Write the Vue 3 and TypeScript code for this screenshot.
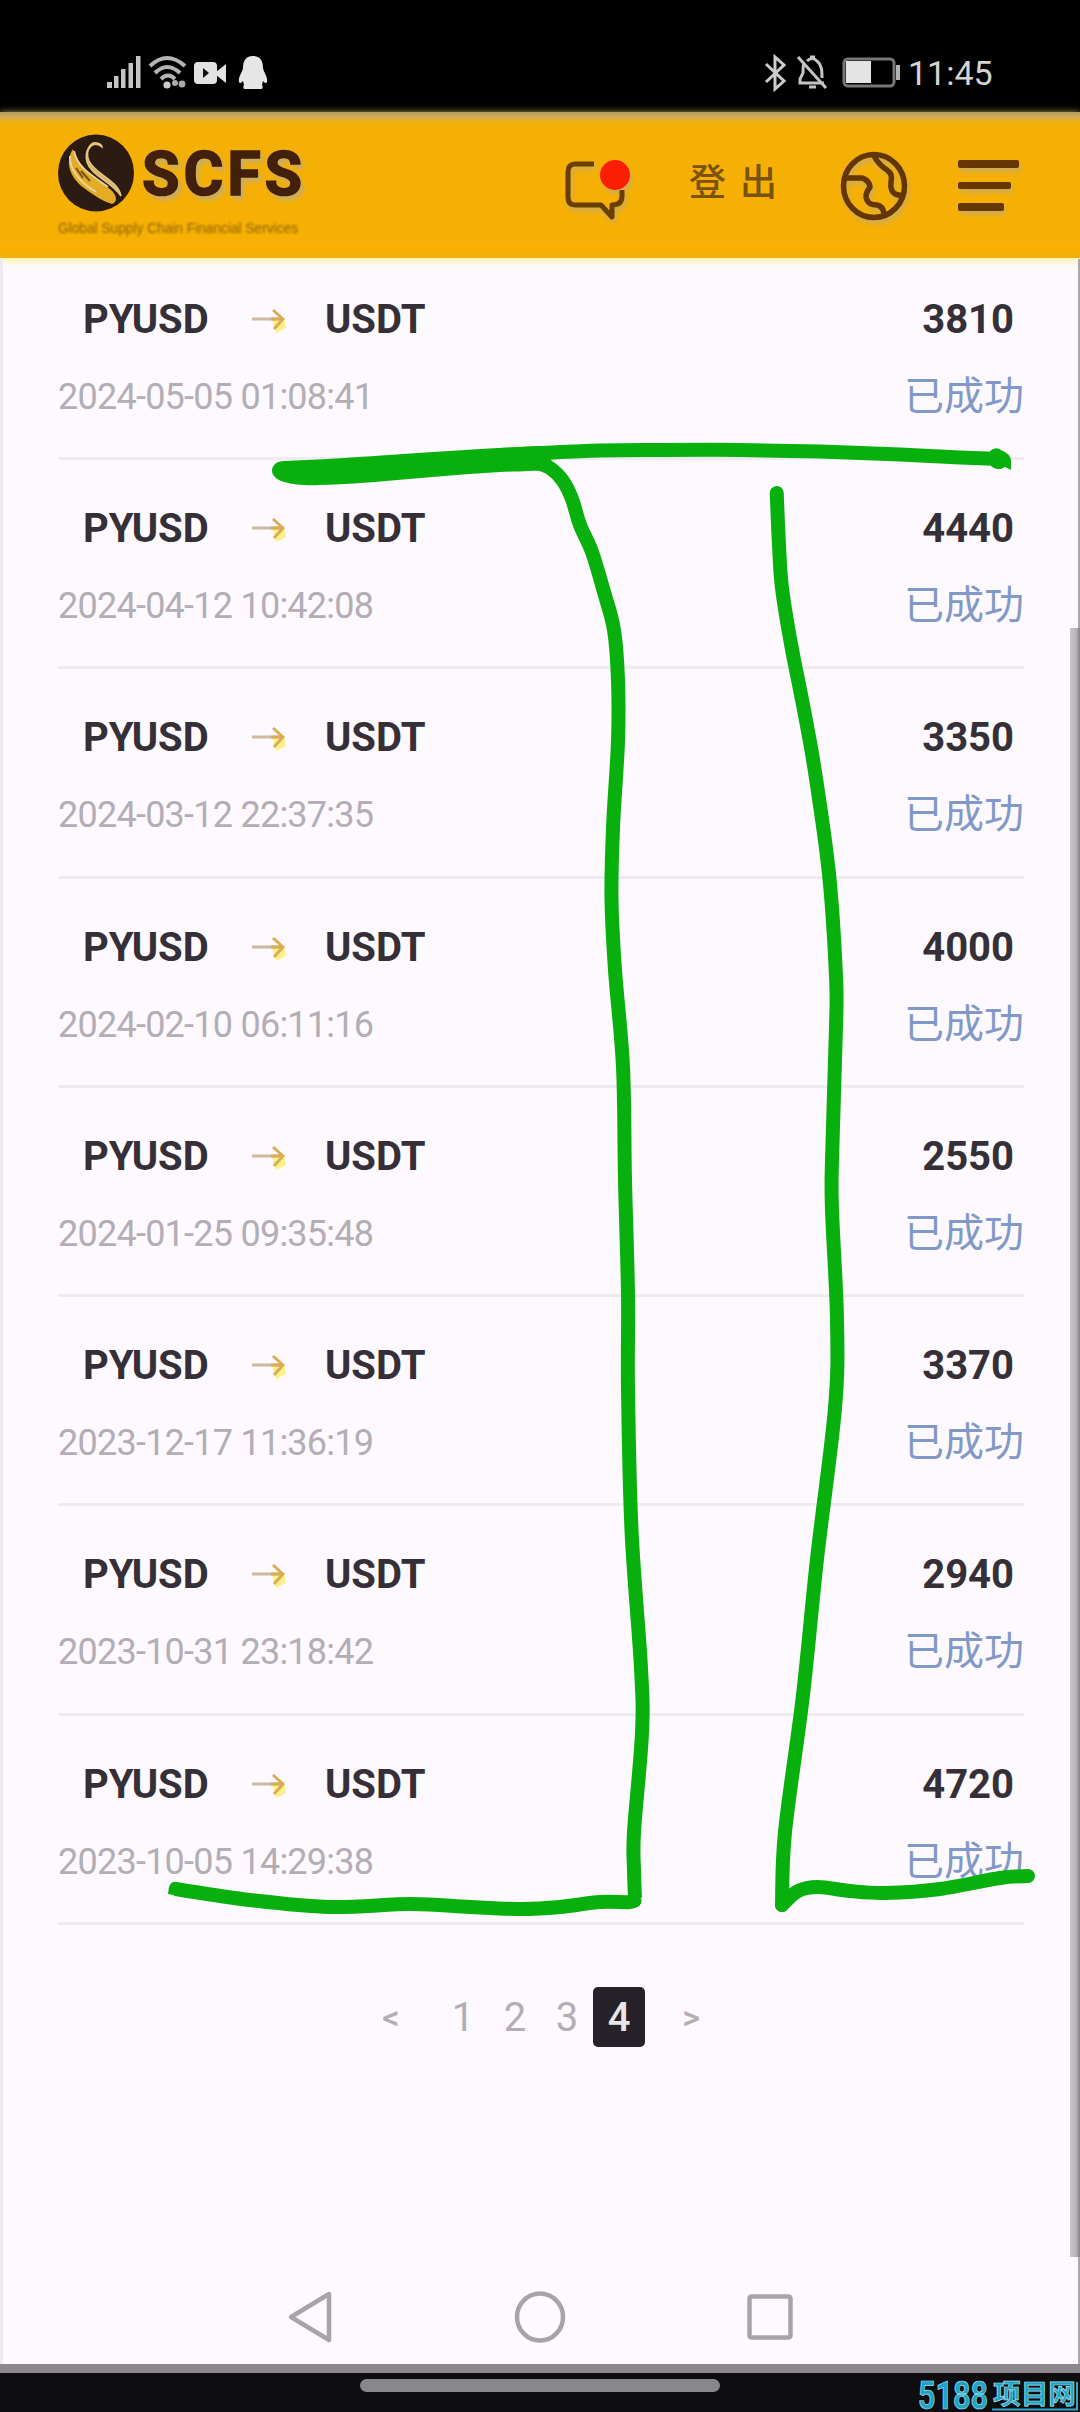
<script setup lang="ts">
interface Swap {
  amount: string
  time: string
}

type Point = [number, number]

const swaps: Swap[] = [
  { amount: '3810', time: '2024-05-05 01:08:41' },
  { amount: '4440', time: '2024-04-12 10:42:08' },
  { amount: '3350', time: '2024-03-12 22:37:35' },
  { amount: '4000', time: '2024-02-10 06:11:16' },
  { amount: '2550', time: '2024-01-25 09:35:48' },
  { amount: '3370', time: '2023-12-17 11:36:19' },
  { amount: '2940', time: '2023-10-31 23:18:42' },
  { amount: '4720', time: '2023-10-05 14:29:38' },
]

const pages: string[] = ['1', '2', '3', '4']
const currentPage = '4'

// Smooth freehand line through the given points (Catmull-Rom to Bezier)
function smooth(pts: Point[]): string {
  let d = `M${pts[0][0]} ${pts[0][1]}`
  for (let i = 0; i < pts.length - 1; i++) {
    const a = pts[Math.max(i - 1, 0)]
    const b = pts[i]
    const c = pts[i + 1]
    const e = pts[Math.min(i + 2, pts.length - 1)]
    d += ` C${b[0] + (c[0] - a[0]) / 6} ${b[1] + (c[1] - a[1]) / 6} ${c[0] - (e[0] - b[0]) / 6} ${c[1] - (e[1] - b[1]) / 6} ${c[0]} ${c[1]}`
  }
  return d
}

const topLine = smooth([[500, 455], [540, 453], [600, 450.5], [660, 450], [740, 450], [820, 451.5], [900, 454.5], [960, 457.5], [1000, 459]])
const leftLine = smooth([
  [536, 463], [550, 468], [563, 481], [572, 499], [580, 525], [592, 552], [604, 592], [614, 630], [618, 680], [618, 741],
  [613, 828], [611.5, 899], [615, 970], [623, 1067], [625, 1180], [628, 1294], [628, 1389], [631.5, 1530],
  [641, 1668], [642, 1733], [634, 1832], [634, 1870], [635, 1898],
])
const leftFoot = smooth([[635, 1898], [630, 1902], [600, 1902], [560, 1907], [522, 1909], [470, 1907], [411, 1904], [330, 1907], [250, 1900], [175, 1889]])
const rightLine = smooth([
  [776.7, 493], [779, 545], [782, 588], [791, 644], [804, 710], [815, 772], [829, 874], [836, 976], [836, 1027],
  [832, 1160], [832, 1210], [837, 1320], [835, 1408], [817, 1559], [803, 1695], [785, 1832], [782, 1905],
])
const rightFoot = smooth([[782, 1905], [798, 1891], [818, 1887], [850, 1891], [885, 1893], [940, 1889], [1000, 1878], [1028, 1876]])
</script>

<template>
  <div class="screen">
    <div class="status-bar">
      <svg class="status-left" viewBox="0 0 164 38" width="164" height="38">
        <g fill="#c4c4c4">
          <rect x="1" y="28" width="5" height="6" />
          <rect x="8" y="22" width="4.500" height="12" />
          <rect x="15" y="15" width="4.500" height="19" />
          <rect x="22.500" y="9" width="4.500" height="25" />
          <rect x="30" y="2" width="4.500" height="32" />
        </g>
        <g fill="none" stroke="#b4b4b4" stroke-width="4">
          <path d="M44 12 Q61 -4 79 12" />
          <path d="M49 19 Q61 7 74 19" />
          <path d="M55 25 Q62 18 69 25" />
        </g>
        <circle cx="61" cy="31" r="3.600" fill="#ccc" />
        <circle cx="69" cy="29" r="3" fill="#aaa" />
        <circle cx="76" cy="30" r="3.400" fill="#aaa" />
        <rect x="88" y="8" width="23" height="22" rx="4" fill="#e2e2e2" />
        <path d="M110 18l10-8v19l-10-8z" fill="#e2e2e2" />
        <path d="M97 14l6 5-6 5z" fill="#111" />
        <path
          d="M147 2c-8 0-10 6-10 12-1 5-5 9-4 14 1 2 2 1 4-1l1 4c-1 1-1 4 1 4h16c2 0 2-3 1-4l1-4c2 2 3 3 4 1 1-5-3-9-4-14 0-6-2-12-10-12z"
          fill="#e6e6e6"
        />
      </svg>
      <div class="status-right">
        <svg viewBox="0 0 138 38" width="138" height="38">
          <path d="M2 10l18 17-9 8V3l9 8L2 28" fill="none" stroke="#ccc" stroke-width="3" />
          <g fill="none" stroke="#c4c4c4" stroke-width="3">
            <path d="M40 9c-1 3-1 6-1 10l-3 6v4h24M43 7c3-3 7-3 10 0 5 4 5 10 5 17" />
            <path d="M34 3l28 31M45 33h7M46 3h5" />
          </g>
          <rect x="80" y="5" width="50" height="27" rx="4" fill="none" stroke="#777" stroke-width="3" />
          <rect x="82" y="7" width="25" height="22" fill="#e4e4e4" />
          <rect x="132" y="11" width="4" height="15" fill="#b4b4b4" />
        </svg>
        <span class="clock">11:45</span>
      </div>
    </div>

    <header class="header">
      <div class="brand">
        <div class="brand-main">
          <svg viewBox="0 0 78 78" width="78" height="78">
            <ellipse cx="39" cy="39" rx="38" ry="38.500" fill="#2c1b12" />
            <path d="M16 15C8 27 12 43 27 54C39 63 48 68 55 70C61 68 60 61 53 55C40 46 18 34 16 15z" fill="#e3ac24" />
            <path d="M13 22C12 36 24 49 39 58M17 17C20 34 37 43 51 53" fill="none" stroke="#e9d39a" stroke-width="2" />
            <path d="M24 37l9 10M19 34l7 10" stroke="#7b5410" stroke-width="2" />
            <path d="M45 13C37 5 27 15 32 27C39 41 61 46 64 62C54 47 34 42 30 28C27 17 34 7 40 9C44 10 45 12 45 13z" fill="#d6b66c" stroke="#e4c67e" stroke-width="1.500" />
          </svg>
          <svg class="wordmark" viewBox="0 0 164 78" width="164" height="78">
            <text x="0" y="61" textLength="160" lengthAdjust="spacing">SCFS</text>
          </svg>
        </div>
        <svg class="tagline" viewBox="0 0 244 24" width="244" height="24">
          <text x="1" y="15" textLength="240" lengthAdjust="spacingAndGlyphs">Global Supply Chain Financial Services</text>
        </svg>
      </div>
      <nav class="actions">
        <svg class="chat" viewBox="0 0 68 66" width="68" height="66">
          <path d="M31 7H12Q5 7 5 15V40Q5 48 12 48H38L49 60V48Q59 48 59 39V33" fill="none" stroke="#6b3f04" stroke-width="5" stroke-linejoin="round" />
          <circle cx="52" cy="18" r="15" fill="#fb1e04" />
        </svg>
        <span class="logout">登出</span>
        <svg class="globe" viewBox="0 0 68 70" width="68" height="70">
          <g fill="none" stroke="#633604" stroke-width="5.500" stroke-linejoin="round">
            <ellipse cx="34" cy="35" rx="30.500" ry="31.500" />
            <path d="M5 27H22Q29 29 30 36Q24 44 27 49Q29 54 37 54Q43 55 44 63" />
            <path d="M34 5Q39 14 47 19Q53 23 51 31Q50 40 55 43L62 45" />
          </g>
        </svg>
        <div class="burger"><i></i><i></i><i></i></div>
      </nav>
    </header>

    <main class="content">
      <ul class="list">
        <li v-for="swap in swaps" :key="swap.time" class="row">
          <div class="line pair-line">
            <span class="from">PYUSD</span>
            <svg class="arrow" viewBox="0 0 42 36" width="42" height="36">
              <path d="M23 18L36 19L37 26L27 31z" fill="#fff08a" />
              <path d="M3 17H34" fill="none" stroke="#cdb8a0" stroke-width="3" />
              <path d="M22 17H34M24 8L34 17L25 27" fill="none" stroke="#d9ad55" stroke-width="3" />
            </svg>
            <span class="to">USDT</span>
            <span class="amount">{{ swap.amount }}</span>
          </div>
          <div class="line meta-line">
            <span class="time">{{ swap.time }}</span>
            <span class="state">已成功</span>
          </div>
        </li>
      </ul>
      <div class="pager">
        <span class="step">&lt;</span>
        <span v-for="page in pages" :key="page" class="page" :class="{ active: page === currentPage }">{{ page }}</span>
        <span class="step">&gt;</span>
      </div>
    </main>

    <div class="system-nav">
      <svg viewBox="0 0 48 56" width="48" height="56"><path d="M42 5V51L4 28z" fill="none" stroke="#aaa2aa" stroke-width="4.500" stroke-linejoin="round" /></svg>
      <svg viewBox="0 0 56 56" width="56" height="56"><ellipse cx="28" cy="28" rx="23" ry="23.500" fill="none" stroke="#aaa2aa" stroke-width="4.500" /></svg>
      <svg viewBox="0 0 50 56" width="50" height="56"><rect x="4.500" y="7.500" width="41" height="41" rx="2" fill="none" stroke="#aaa2aa" stroke-width="4.500" /></svg>
    </div>

    <footer class="gesture">
      <div class="pill"></div>
    </footer>

    <div class="edge edge-left"></div>
    <div class="edge edge-right"></div>
    <div class="scrollbar"></div>

    <svg class="ink" viewBox="0 0 1080 2412" width="1080" height="2412">
      <path d="M284 461C350 459 440 450 545 446L555 469C530 472 520 471 500 472C440 475 370 484 320 485C296 486 273 483 272 471C272 465 277 461 284 461z" fill="#07b00c" />
      <g fill="none" stroke="#07b00c" stroke-width="14" stroke-linejoin="round">
        <path :d="topLine" />
        <path :d="leftLine" />
        <path :d="leftFoot" />
        <path :d="rightLine" stroke-linecap="round" />
        <path :d="rightFoot" stroke-linecap="round" />
      </g>
      <circle cx="635" cy="1901" r="6.500" fill="#07b00c" />
      <path d="M990 451Q996 446 1001 450Q1011 454 1011 461V470L1005 467Q997 472 991 466z" fill="#07b00c" />
      <path d="M168 1894L169 1887Q171 1881 177 1882L179 1896z" fill="#07b00c" />
    </svg>

    <svg class="watermark" viewBox="0 0 164 44" width="164" height="44">
      <text class="mark-num" x="2" y="41" textLength="70" lengthAdjust="spacingAndGlyphs">5188</text>
      <text class="mark-name" x="77" y="36" textLength="83" lengthAdjust="spacingAndGlyphs">项目网</text>
      <path d="M76 41.500H161V14" fill="none" stroke="#2aa9cb" stroke-width="2" />
    </svg>
  </div>
</template>

<style>
body {
  margin: 0;
  background: #0e0e10;
}
</style>

<style scoped>
.screen {
  position: relative;
  display: flex;
  flex-direction: column;
  width: 1080px;
  height: 2412px;
  overflow: hidden;
  background: #fdf9fe;
  font-family: Roboto, 'Noto Sans CJK TC', sans-serif;
}

svg {
  display: block;
  flex: none;
}

.status-bar {
  box-sizing: border-box;
  display: flex;
  justify-content: space-between;
  align-items: flex-start;
  height: 112px;
  padding: 54px 84px 0 106px;
  background: #000;
}

.status-right {
  display: flex;
  align-items: center;
  gap: 6px;
}

.clock {
  width: 88px;
  color: #d4d4d4;
  font-size: 34px;
  line-height: 38px;
}

.header {
  box-sizing: border-box;
  display: flex;
  justify-content: space-between;
  height: 146px;
  padding: 28px 61px 0 57px;
  background: linear-gradient(#b29b66, #cfae52 5px, #f5b006 11px, #f7b003 140px, #efb012);
  box-shadow: 0 2px 8px #fff27c;
}

.brand {
  margin-top: -6px;
}

.brand-main {
  display: flex;
  gap: 7px;
}

.wordmark {
  filter: drop-shadow(3px 4px 2px #c9ad62);
}

.wordmark text {
  fill: #42200c;
  stroke: #42200c;
  stroke-width: 1.5px;
  font: 700 61px Roboto, sans-serif;
}

.tagline {
  margin-top: 6px;
}

.tagline text {
  fill: #8d6306;
  font: 14px 'Liberation Sans', sans-serif;
  filter: blur(0.8px);
}

.actions {
  display: flex;
  align-items: flex-start;
}

.chat {
  margin-top: 17px;
}

.logout {
  width: 102px;
  margin: 18px 0 0 58px;
  color: #7b520b;
  font-size: 37px;
  font-weight: 500;
  line-height: 52px;
  letter-spacing: 14px;
}

.globe {
  margin: 11px 0 0 49px;
}

.chat,
.globe,
.burger {
  filter: drop-shadow(2px 4px 2px #d0ac50);
}

.burger {
  display: flex;
  flex-direction: column;
  gap: 14px;
  width: 61px;
  margin: 20px 0 0 50px;
}

.burger i {
  height: 7.5px;
  border-radius: 2px;
  background: #663605;
}

.burger i:nth-child(2) {
  width: 53px;
}

.burger i:nth-child(3) {
  width: 46px;
}

.content {
  flex: 1;
}

.list {
  margin: 0;
  padding: 0 56px 0 58px;
  list-style: none;
}

.row {
  box-sizing: border-box;
  height: 209.3px;
  padding-top: 45px;
  border-bottom: 3px solid #f0eaf1;
}

.list .row:first-child {
  height: 202px;
  padding-top: 38px;
}

.line {
  display: flex;
  align-items: center;
}

.pair-line {
  height: 48px;
  padding: 0 10px 0 25px;
  color: #352f38;
  font-size: 40px;
  font-weight: 700;
  line-height: 48px;
}

.from {
  width: 128px;
}

.arrow {
  margin: 0 34px 0 38px;
}

.amount {
  margin-left: auto;
}

.meta-line {
  justify-content: space-between;
  height: 50px;
  margin-top: 28px;
}

.time {
  color: #b3adb5;
  font-size: 36px;
  letter-spacing: -0.75px;
  white-space: nowrap;
}

.state {
  color: #8199c8;
  font-size: 40px;
  line-height: 50px;
}

.pager {
  display: flex;
  justify-content: center;
  align-items: center;
  height: 60px;
  margin-top: 62px;
  padding-left: 2px;
  color: #b3adb4;
  font-size: 40px;
}

.page {
  width: 52px;
  height: 60px;
  line-height: 61px;
  text-align: center;
}

.page.active {
  border-radius: 5px;
  background: #272129;
  color: #e9e6ea;
  font-weight: 500;
}

.step {
  width: 92px;
  font-size: 34px;
  font-weight: 500;
  text-align: center;
}

.system-nav {
  display: flex;
  align-items: flex-start;
  gap: 177px;
  height: 75px;
  padding: 0 0 0 287px;
}

.gesture {
  box-sizing: border-box;
  display: flex;
  justify-content: center;
  height: 48px;
  padding-top: 6px;
  border-top: 9px solid #8e8990;
  background: #0e0e10;
}

.pill {
  width: 360px;
  height: 13px;
  border-radius: 7px;
  background: #88878b;
}

.edge {
  position: absolute;
  top: 259px;
  width: 3px;
  height: 2105px;
}

.edge-left {
  left: 0;
  background: #eeebf0;
}

.edge-right {
  right: 0;
  width: 2px;
  background: #aaa6a9;
}

.scrollbar {
  position: absolute;
  top: 628px;
  right: 0;
  width: 10px;
  height: 1629px;
  background: linear-gradient(90deg, #c9c5ca, #b7b3b7 60%, #858085);
}

.ink {
  position: absolute;
  top: 0;
  left: 0;
  pointer-events: none;
}

.watermark {
  position: absolute;
  right: 0;
  bottom: 0;
}

.watermark text {
  fill: #1fa3c8;
  stroke: #a8e4f0;
  stroke-width: 0.7px;
}

.mark-num {
  font: 700 38px Roboto, sans-serif;
}

.mark-name {
  font: 700 27px 'Noto Sans CJK SC', sans-serif;
}
</style>
